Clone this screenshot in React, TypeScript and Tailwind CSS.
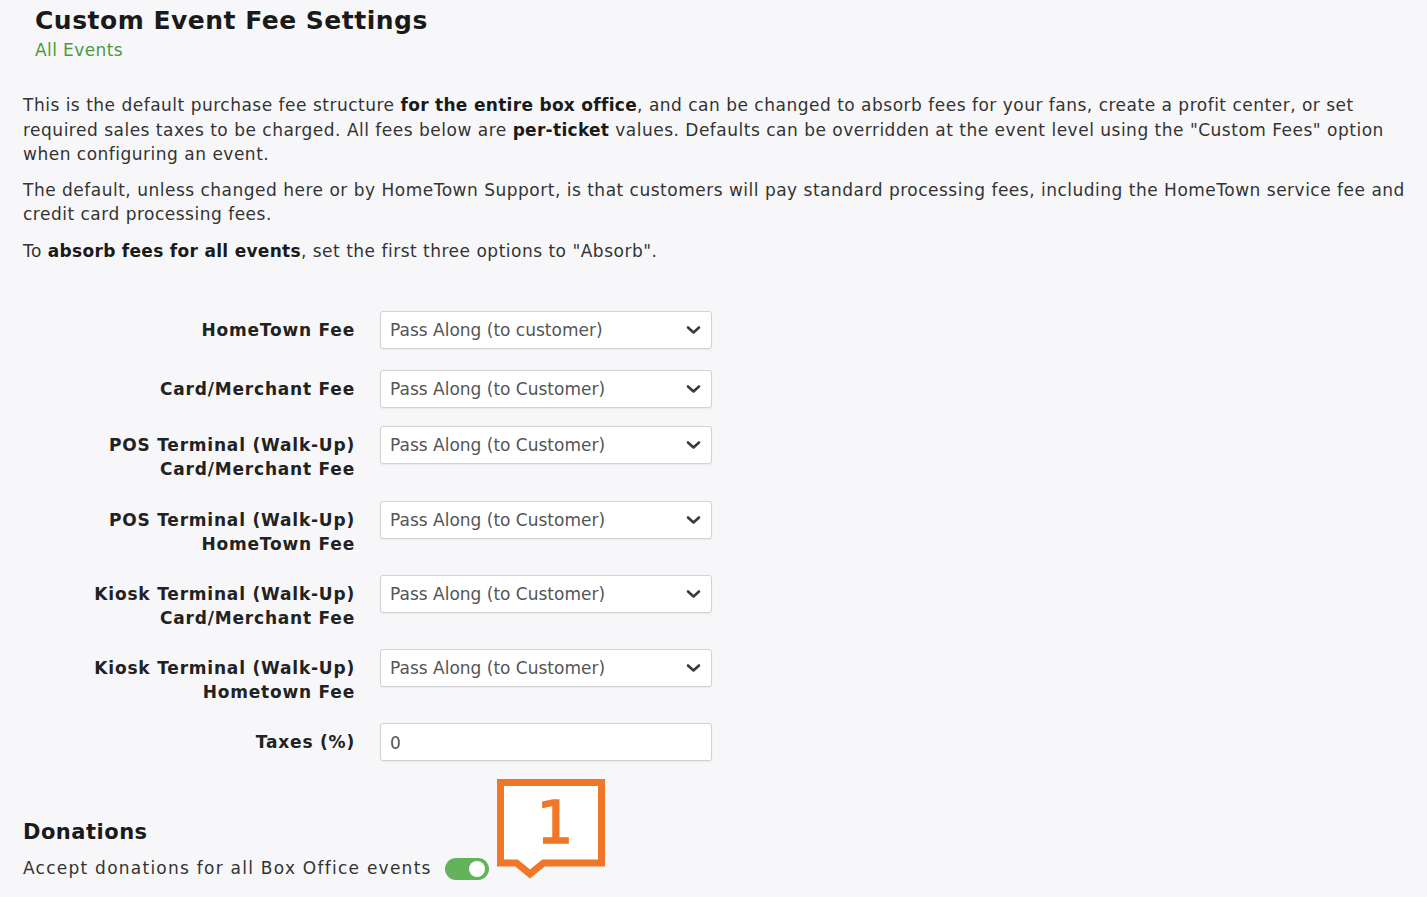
import React from "react";

const font = { fontFamily: '"DejaVu Sans", Verdana, sans-serif' };

function Chevron() {
  return (
    <svg
      className="pointer-events-none absolute right-[11px] top-1/2 -translate-y-1/2"
      width="15"
      height="10"
      viewBox="0 0 15 10"
      fill="none"
    >
      <path d="M2 2.5l5.5 5 5.5-5" stroke="#3a3a3a" strokeWidth="2.6" strokeLinecap="round" strokeLinejoin="round" />
    </svg>
  );
}

function SelectBox({ value }: { value: string }) {
  return (
    <div className="relative h-[38px] w-[332px] shrink-0">
      <select
        defaultValue={value}
        className="h-full w-full appearance-none rounded-[3px] border border-[#d2d2d2] bg-white pl-[9px] pr-8 pt-[2px] text-[17px] text-[#555] shadow-[0_1px_2px_rgba(0,0,0,0.06)] outline-none"
        style={font}
      >
        <option>{value}</option>
        <option>Absorb</option>
      </select>
      <Chevron />
    </div>
  );
}

function Row({ label, value, input, mt }: { label: string[]; value?: string; input?: boolean; mt: string }) {
  return (
    <div className={`flex items-start gap-[25px] ${mt}`}>
      <div className="w-[332px] shrink-0 pt-[7px] text-right text-[17px] font-bold leading-[24px] tracking-[0.8px] text-[#222]">
        {label.map((l) => (
          <div key={l}>{l}</div>
        ))}
      </div>
      {input ? (
        <input
          defaultValue="0"
          className="h-[38px] w-[332px] shrink-0 rounded-[3px] border border-[#d2d2d2] bg-white pl-[9px] pt-[2px] text-[17px] text-[#555] shadow-[0_1px_2px_rgba(0,0,0,0.06)] outline-none"
          style={font}
        />
      ) : (
        <SelectBox value={value!} />
      )}
    </div>
  );
}

const B = ({ children }: { children: React.ReactNode }) => (
  <b className="tracking-[0.3px] text-[#1a1a1a]">{children}</b>
);

export default function App() {
  return (
    <div className="relative min-h-screen w-full overflow-hidden bg-[#f7f7f9] text-[17px] text-[#333]" style={font}>
      <div className="pl-[35px] pt-[6px]">
        <h1 className="text-[25px] font-bold leading-[30px] tracking-[0.5px] text-[#1a1a1a]">Custom Event Fee Settings</h1>
        <div className="mt-[2px] text-[17px] leading-[24px] tracking-[0.4px] text-[#4a9a3c]">All Events</div>
      </div>

      <div className="whitespace-nowrap pl-[23px] pt-[31px] leading-[24.5px] tracking-[0.5px]">
        <p className="mb-[11px]">
          This is the default purchase fee structure <B>for the entire box office</B>, and can be changed to absorb fees for your fans, create a profit center, or set
          <br />
          required sales taxes to be charged. All fees below are <B>per-ticket</B> values. Defaults can be overridden at the event level using the "Custom Fees" option
          <br />
          when configuring an event.
        </p>
        <p className="mb-[12px]">
          The default, unless changed here or by HomeTown Support, is that customers will pay standard processing fees, including the HomeTown service fee and
          <br />
          credit card processing fees.
        </p>
        <p>
          To <B>absorb fees for all events</B>, set the first three options to "Absorb".
        </p>
      </div>

      <div className="mt-[48px] flex flex-col pl-[23px]">
        <Row mt="mt-0" label={["HomeTown Fee"]} value="Pass Along (to customer)" />
        <Row mt="mt-[21px]" label={["Card/Merchant Fee"]} value="Pass Along (to Customer)" />
        <Row mt="mt-[18px]" label={["POS Terminal (Walk-Up)", "Card/Merchant Fee"]} value="Pass Along (to Customer)" />
        <Row mt="mt-[20px]" label={["POS Terminal (Walk-Up)", "HomeTown Fee"]} value="Pass Along (to Customer)" />
        <Row mt="mt-[19px]" label={["Kiosk Terminal (Walk-Up)", "Card/Merchant Fee"]} value="Pass Along (to Customer)" />
        <Row mt="mt-[19px]" label={["Kiosk Terminal (Walk-Up)", "Hometown Fee"]} value="Pass Along (to Customer)" />
        <Row mt="mt-[19px]" label={["Taxes (%)"]} input />
      </div>

      <div className="pl-[23px] pt-[58px]">
        <h2 className="text-[21px] font-bold leading-[26px] tracking-[0.5px] text-[#1a1a1a]">Donations</h2>
        <div className="mt-[10px] flex items-center gap-[13px] leading-[24px] tracking-[1.25px]">
          <span>Accept donations for all Box Office events</span>
          <span className="relative mt-[3px] inline-flex h-[22px] w-[44px] items-center rounded-full bg-[#62b35c]">
            <span className="absolute right-[4px] h-[16px] w-[16px] rounded-full bg-white" />
          </span>
        </div>
      </div>

      <div className="absolute left-[496px] top-[778px] h-[101px] w-[110px]">
        <svg width="110" height="101" viewBox="0 0 110 101" className="absolute inset-0">
          <path
            d="M4.5 4.5 H105.5 V85 H47.5 L34 96 L20.5 85 H4.5 Z"
            fill="#ffffff"
            stroke="#f07628"
            strokeWidth="7"
            strokeLinejoin="miter"
          />
        </svg>
        <span
          className="absolute left-0 top-[8px] w-full pl-[8px] text-center text-[58px] leading-[74px] text-[#f07628] [-webkit-text-stroke:1.5px_#f07628]"
          style={font}
        >
          1
        </span>
      </div>
    </div>
  );
}
